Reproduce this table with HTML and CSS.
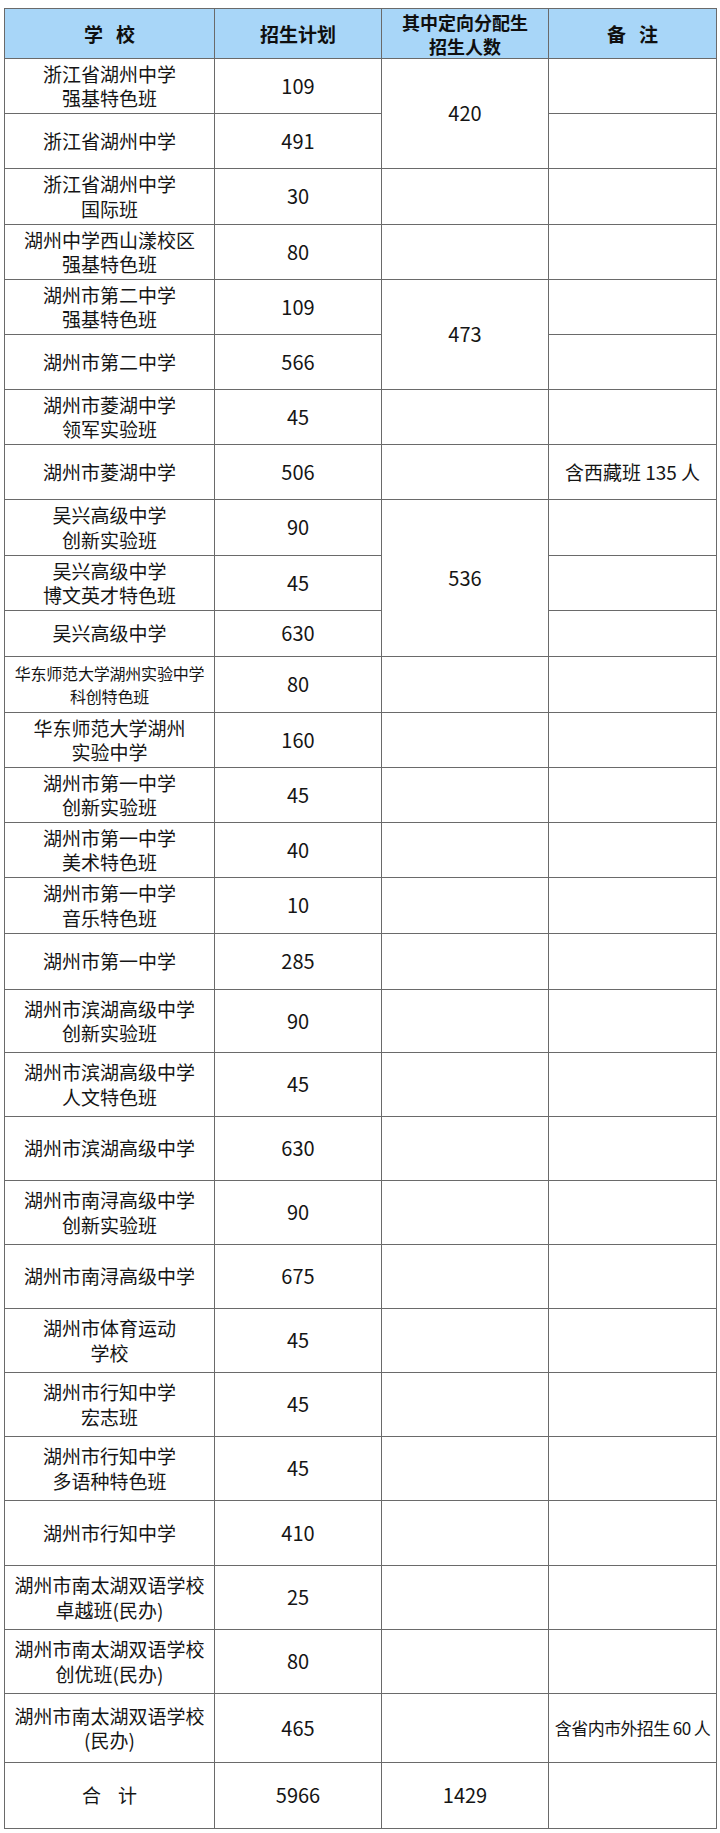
FILE: index.html
```html
<!DOCTYPE html>
<html lang="zh-CN">
<head>
<meta charset="utf-8">
<title>招生计划</title>
<link rel="stylesheet" href="styles.css">
</head>
<body>
<table class="plan">
  <colgroup>
    <col class="c-school">
    <col class="c-num">
    <col class="c-alloc">
    <col class="c-note">
  </colgroup>
  <thead>
    <tr class="head">
      <th>学&nbsp;&nbsp;&nbsp;校</th>
      <th>招生计划</th>
      <th class="two">其中定向分配生<br>招生人数</th>
      <th>备&nbsp;&nbsp;&nbsp;注</th>
    </tr>
  </thead>
  <tbody>
    <tr class="r55"><td>浙江省湖州中学<br>强基特色班</td><td class="num">109</td><td class="num" rowspan="2">420</td><td></td></tr>
    <tr class="r55"><td>浙江省湖州中学</td><td class="num">491</td><td></td></tr>
    <tr class="r56"><td>浙江省湖州中学<br>国际班</td><td class="num">30</td><td></td><td></td></tr>
    <tr class="r55"><td>湖州中学西山漾校区<br>强基特色班</td><td class="num">80</td><td></td><td></td></tr>
    <tr class="r55"><td>湖州市第二中学<br>强基特色班</td><td class="num">109</td><td class="num" rowspan="2">473</td><td></td></tr>
    <tr class="r55"><td>湖州市第二中学</td><td class="num">566</td><td></td></tr>
    <tr class="r55"><td>湖州市菱湖中学<br>领军实验班</td><td class="num">45</td><td></td><td></td></tr>
    <tr class="r55"><td>湖州市菱湖中学</td><td class="num">506</td><td></td><td>含西藏班 135 人</td></tr>
    <tr class="r56"><td>吴兴高级中学<br>创新实验班</td><td class="num">90</td><td class="num" rowspan="3">536</td><td></td></tr>
    <tr class="r55"><td>吴兴高级中学<br>博文英才特色班</td><td class="num">45</td><td></td></tr>
    <tr class="r46"><td>吴兴高级中学</td><td class="num">630</td><td></td></tr>
    <tr class="r56"><td class="small">华东师范大学湖州实验中学<br>科创特色班</td><td class="num">80</td><td></td><td></td></tr>
    <tr class="r55"><td>华东师范大学湖州<br>实验中学</td><td class="num">160</td><td></td><td></td></tr>
    <tr class="r55"><td>湖州市第一中学<br>创新实验班</td><td class="num">45</td><td></td><td></td></tr>
    <tr class="r55"><td>湖州市第一中学<br>美术特色班</td><td class="num">40</td><td></td><td></td></tr>
    <tr class="r56"><td>湖州市第一中学<br>音乐特色班</td><td class="num">10</td><td></td><td></td></tr>
    <tr class="r56"><td>湖州市第一中学</td><td class="num">285</td><td></td><td></td></tr>
    <tr class="r63"><td>湖州市滨湖高级中学<br>创新实验班</td><td class="num">90</td><td></td><td></td></tr>
    <tr class="r64"><td>湖州市滨湖高级中学<br>人文特色班</td><td class="num">45</td><td></td><td></td></tr>
    <tr class="r64"><td>湖州市滨湖高级中学</td><td class="num">630</td><td></td><td></td></tr>
    <tr class="r64"><td>湖州市南浔高级中学<br>创新实验班</td><td class="num">90</td><td></td><td></td></tr>
    <tr class="r64"><td>湖州市南浔高级中学</td><td class="num">675</td><td></td><td></td></tr>
    <tr class="r64"><td>湖州市体育运动<br>学校</td><td class="num">45</td><td></td><td></td></tr>
    <tr class="r64"><td>湖州市行知中学<br>宏志班</td><td class="num">45</td><td></td><td></td></tr>
    <tr class="r64"><td>湖州市行知中学<br>多语种特色班</td><td class="num">45</td><td></td><td></td></tr>
    <tr class="r65"><td>湖州市行知中学</td><td class="num">410</td><td></td><td></td></tr>
    <tr class="r64"><td>湖州市南太湖双语学校<br>卓越班(民办)</td><td class="num">25</td><td></td><td></td></tr>
    <tr class="r64"><td>湖州市南太湖双语学校<br>创优班(民办)</td><td class="num">80</td><td></td><td></td></tr>
    <tr class="r69"><td>湖州市南太湖双语学校<br>(民办)</td><td class="num">465</td><td></td><td class="note-s">含省内市外招生 60 人</td></tr>
    <tr class="r66"><td>合&nbsp;&nbsp;&nbsp;&nbsp;计</td><td class="num">5966</td><td class="num">1429</td><td></td></tr>
  </tbody>
</table>
</body>
</html>
```

FILE: styles.css
```css
html, body {
  margin: 0;
  padding: 0;
  background: #ffffff;
}

body {
  font-family: "Noto Sans CJK SC", "Noto Sans", sans-serif;
  color: #151515;
}

.plan {
  margin: 8px 0 0 4px;
  width: 712px;
  border-collapse: collapse;
  table-layout: fixed;
}

.c-school { width: 210px; }
.c-num { width: 167px; }
.c-alloc { width: 167px; }
.c-note { width: 168px; }

.plan th,
.plan td {
  border: 1px solid #6a6a6a;
  padding: 0 1px;
  text-align: center;
  vertical-align: middle;
  font-size: 19px;
  line-height: 24.5px;
  font-weight: 400;
  letter-spacing: 0;
}

.plan .head {
  height: 50px;
}

.plan th {
  background: #a8d6f8;
  font-weight: 700;
  color: #0f0f0f;
  line-height: 24px;
}

.plan th.two {
  font-size: 18px;
}

.plan td.num {
  font-size: 20px;
}

.plan td.small {
  font-size: 16px;
  line-height: 23px;
  letter-spacing: -0.2px;
}

.plan td.note-s {
  font-size: 17px;
  letter-spacing: -0.6px;
}

.r46 { height: 46px; }
.r55 { height: 55px; }
.r56 { height: 56px; }
.r63 { height: 63px; }
.r64 { height: 64px; }
.r65 { height: 65px; }
.r66 { height: 66px; }
.r69 { height: 69px; }
```
